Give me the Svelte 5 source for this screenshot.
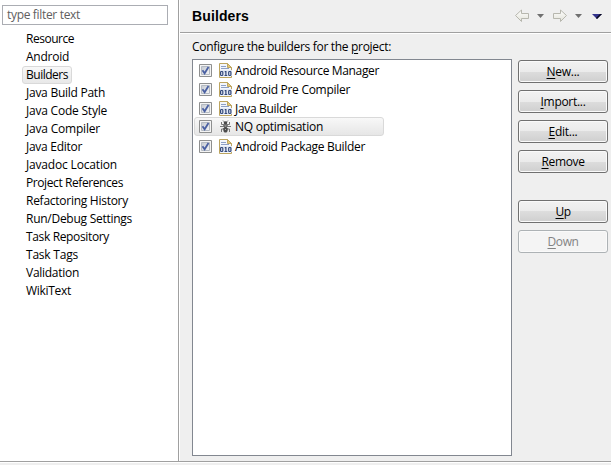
<script>
  const pages = [
    ['Resource', 48], ['Android', 43], ['Builders', 42], ['Java Build Path', 79], ['Java Code Style', 81],
    ['Java Compiler', 74], ['Java Editor', 56], ['Javadoc Location', 91], ['Project References', 97],
    ['Refactoring History', 102], ['Run/Debug Settings', 106], ['Task Repository', 83],
    ['Task Tags', 52], ['Validation', 53], ['WikiText', 45]
  ];
  const builders = [
    { name: 'Android Resource Manager', w: 144 },
    { name: 'Android Pre Compiler', w: 115 },
    { name: 'Java Builder', w: 62 },
    { name: 'NQ optimisation', w: 88, selected: true },
    { name: 'Android Package Builder', w: 130 }
  ];
  const buttons = [
    ['N', 'ew...', 33], ['I', 'mport...', 45], ['E', 'dit...', 29], ['R', 'emove', 43], ['U', 'p', 15], ['D', 'own', 31]
  ];
  // Spreads the letters so that a label takes exactly the given width.
  function fit(node, width) {
    const n = node.textContent.length;
    const natural = node.getBoundingClientRect().width;
    node.style.letterSpacing = (width - natural) / n + 'px';
  }
</script>

<div class="window">
  <div class="main">
    <aside>
      <div class="filter"><span use:fit={73}>type filter text</span></div>
      <ul>
        {#each pages as [name, w]}
          <li class:current={name === 'Builders'}><span use:fit={w}>{name}</span></li>
        {/each}
      </ul>
    </aside>
    <section>
      <header>
        <h1><span use:fit={57}>Builders</span></h1>
        <svg width="92" height="16" viewBox="0 0 92 16" fill="none">
          <defs><linearGradient id="arrow" x2="0" y2="1"><stop stop-color="#fff" /><stop offset="1" stop-color="#e2e2d8" /></linearGradient></defs>
          <path d="M.5 7.5 6.5 2V5.5H13.5V10.5H6.5V13.5Z" fill="url(#arrow)" stroke="#b7b7ae" />
          <path d="M22 6h7l-3.5 4z" fill="#707070" />
          <path d="M51.5 7.5 45.5 2V5.5H38.5V10.5H45.5V13.5Z" fill="url(#arrow)" stroke="#b7b7ae" />
          <path d="M60 6h7l-3.5 4z" fill="#707070" />
          <path d="M77 6h10l-5 5z" fill="#33338c" /><path d="M87 6h-2l-4 4 1 1z" fill="#08081c" />
        </svg>
      </header>
      <div class="content">
        <div class="caption"><span use:fit={199}>Configure the builders for the <u>p</u>roject:</span></div>
        <div class="columns">
          <div class="list">
            {#each builders as b}
              <div class="row" class:selected={b.selected}>
                <svg class="check" width="13" height="13" viewBox="0 0 13 13">
                  <defs><linearGradient id="box" x2="1" y2="1"><stop stop-color="#c4c9d0" /><stop offset="1" stop-color="#f7f7f7" /></linearGradient></defs>
                  <path d="M.5.5h12v12H.5z" fill="#f4f4f4" stroke="#8e8f8f" />
                  <path d="M2.5 2.5h8v8h-8z" fill="url(#box)" stroke="#b4bac3" />
                  <path d="M3.5 6.3 5.6 9.3 9.5 3" fill="none" stroke="#4a60a2" stroke-width="1.8" />
                </svg>
                {#if b.selected}
                  <svg class="icon" width="13" height="15" viewBox="0 0 13 15">
                    <path d="M4 1.5 5.5 3M9 1.5 7.5 3M2.5 3v2.5h8V3M1 7.5h11M2.5 13v-3h8v3M4 6l5 4M9 6 4 10" fill="none" stroke="#777" />
                    <ellipse cx="6.5" cy="3.8" rx="1.8" ry="1.6" fill="#484848" /><ellipse cx="6.5" cy="7" rx="1.6" ry="1.5" fill="#666" />
                    <ellipse cx="6.5" cy="10.7" rx="2.2" ry="2.8" fill="#4b4b4b" /><path d="M6 7h1M6 10.5h1" stroke="#aaa" />
                  </svg>
                {:else}
                  <svg class="icon" width="13" height="15" viewBox="0 0 13 15">
                    <path d="M.5.5H8.5L12.5 4.5V14.5H.5Z" fill="#f3f6fc" stroke="#bda560" />
                    <path d="M8.5.5V4.5H12.5Z" fill="#e6c977" stroke="#bda560" />
                    <path d="M2 3.5h5M2 5.5h8" stroke="#8da0c6" />
                    <path d="M1 7h12v6H1z" fill="#e4eaf6" />
                    <rect x="1.6" y="8.5" width="2.2" height="4" rx=".8" fill="none" stroke="#34497a" stroke-width="1.2" />
                    <rect x="9.7" y="8.5" width="2.2" height="4" rx=".8" fill="none" stroke="#34497a" stroke-width="1.2" />
                    <path d="M5.7 8.6h1.2V13M5.5 12.5h2.7" fill="none" stroke="#34497a" stroke-width="1.2" />
                  </svg>
                {/if}
                <span use:fit={b.w}>{b.name}</span>
              </div>
            {/each}
          </div>
          <div class="buttons">
            {#each buttons as [key, rest, w]}
              <button disabled={key === 'D'} class:gap={key === 'U'}><span use:fit={w}><u>{key}</u>{rest}</span></button>
            {/each}
          </div>
        </div>
      </div>
    </section>
  </div>
  <footer></footer>
</div>

<style>
  :global(body) { margin: 0; overflow: hidden; }
  .window { width: 611px; height: 465px; display: flex; flex-direction: column; background: #efefef; color: #000; font: 12px/18px "Open Sans", "Noto Sans", sans-serif; white-space: nowrap; }
  .main { flex: 1; display: flex; min-height: 0; }
  span { display: inline-block; }
  u { text-decoration: underline; text-underline-offset: 2px; text-decoration-thickness: 1px; }
  aside { box-sizing: border-box; width: 179px; padding: 5px 0 0 2px; background: #fff; border-right: 1px solid #a0a0a0; }
  .filter { box-sizing: border-box; width: 166px; height: 20px; padding-left: 4px; border: 1px solid #abadb3; color: #606060; line-height: 18px; }
  ul { list-style: none; margin: 5px 0 0 20px; padding: 0; display: flex; flex-direction: column; align-items: flex-start; }
  li { box-sizing: border-box; height: 18px; padding: 0 3px; border: 1px solid transparent; border-radius: 3px; line-height: 16px; }
  li.current { border-color: #d9d9d9; background: linear-gradient(#f8f8f8, #e8e8e8); }
  section { flex: 1; display: flex; flex-direction: column; border-left: 1px solid #fff; min-width: 0; }
  header { box-sizing: border-box; height: 34px; display: flex; justify-content: space-between; padding: 8px 4px 0 12px; border-bottom: 1px solid #fff; box-shadow: inset 0 -1px #a0a0a0; }
  h1 { margin: 0; font: bold 14px/17px "Liberation Sans", Arial, sans-serif; }
  .content { flex: 1; display: flex; flex-direction: column; padding: 4px 3px 5px 12px; }
  .caption { height: 21px; }
  .columns { flex: 1; display: flex; gap: 6px; }
  .list { box-sizing: border-box; width: 320px; padding: 1px; background: #fff; border: 1px solid #828790; }
  .row { box-sizing: border-box; width: 190px; height: 19px; display: flex; align-items: center; padding-left: 4px; border: 1px solid transparent; border-radius: 3px; line-height: 17px; }
  .row.selected { margin: -1px 0 1px; border-color: #d9d9d9; background: linear-gradient(#f8f8f8, #e6e6e6); }
  .check { margin-right: 7px; }
  .icon { margin-right: 3px; }
  .buttons { flex: 1; display: flex; flex-direction: column; gap: 7px; padding-top: 1px; }
  button { box-sizing: border-box; width: 90px; height: 23px; padding: 0; border: 1px solid #707070; border-radius: 3px; background: linear-gradient(#f2f2f2, #ebebeb 50%, #dddddd 50%, #cfcfcf); box-shadow: inset 0 0 0 1px #fafafa; font: inherit; line-height: 19px; color: #000; }
  button:disabled { border-color: #adb2b5; background: #f4f4f4; color: #838383; }
  .gap { margin-top: 20px; }
  footer { height: 2px; border-top: 1px solid #a0a0a0; background: linear-gradient(#fff 1px, #efefef 1px); padding-bottom: 1px; }
</style>
